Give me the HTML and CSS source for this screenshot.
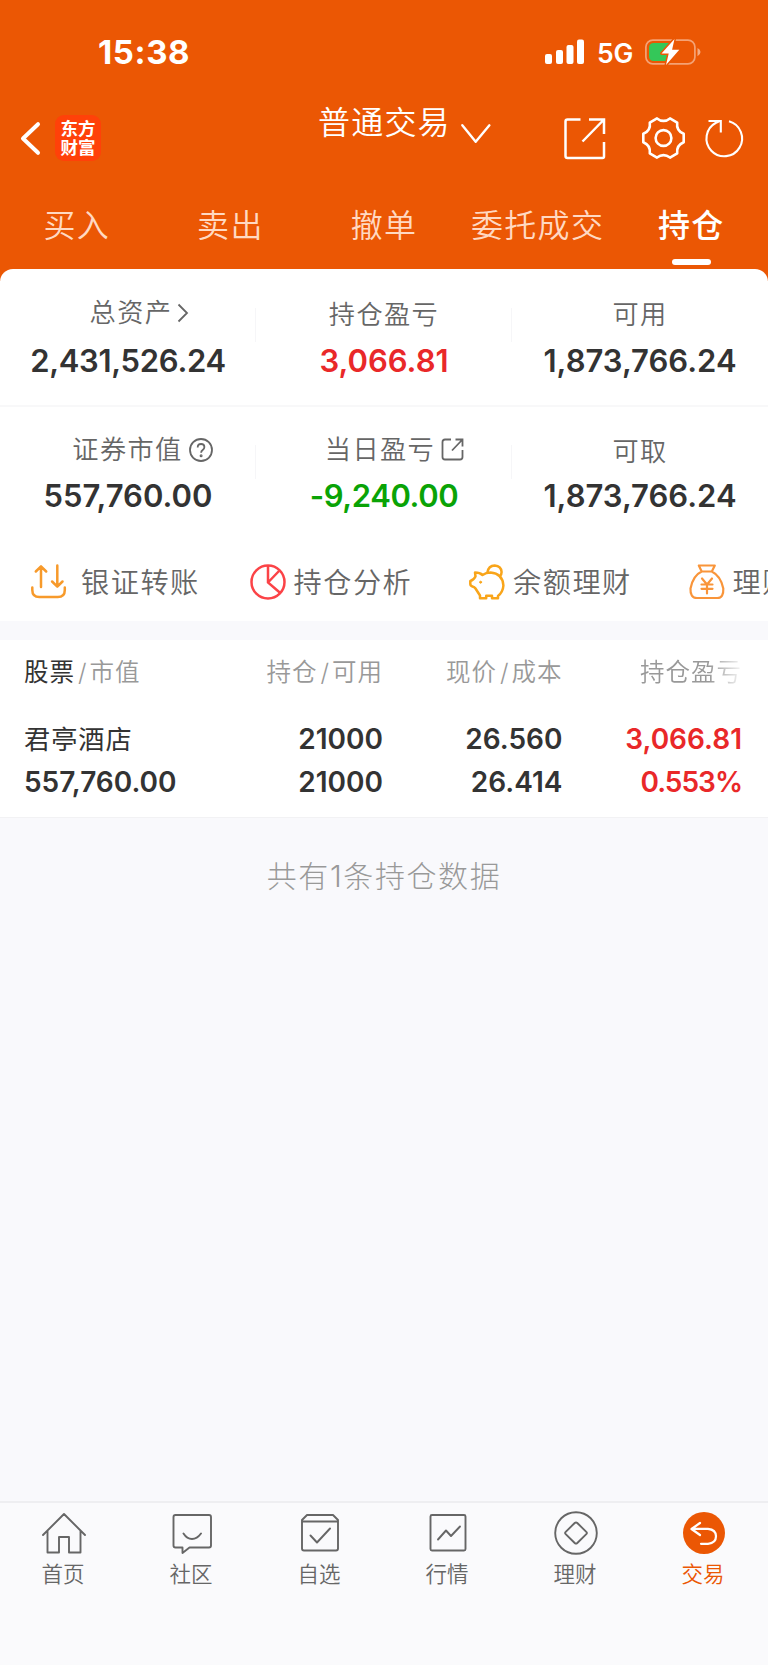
FILE: index.html
```html
<!DOCTYPE html>
<html lang="zh-CN">

<head>
    <meta charset="UTF-8">
    <meta name="viewport" content="width=device-width, initial-scale=1.0">
    <title>普通交易 - 持仓</title>
    <link rel="stylesheet" href="styles.css">
</head>

<body>
    <header class="top">
        <div class="status-bar">
            <span class="time">15:38</span>
            <div class="status-right">
                <svg class="signal" width="40" height="26" viewBox="0 0 40 26" fill="#fff">
                    <rect x="0" y="15" width="7" height="10" rx="2" />
                    <rect x="11" y="11" width="7" height="14" rx="2" />
                    <rect x="21.500" y="6" width="7" height="19" rx="2" />
                    <rect x="32" y="0.500" width="7" height="24.500" rx="2" />
                </svg>
                <span class="network">5G</span>
                <svg class="battery" width="56" height="28" viewBox="0 0 56 28">
                    <rect x="0.900" y="2.100" width="49" height="23.800" rx="7" fill="none" stroke="#fff" stroke-opacity=".45" stroke-width="1.700" />
                    <path d="M52.500 10v8.200q3-1.400 3-4.100t-3-4.100z" fill="#fff" fill-opacity=".5" />
                    <path d="M9 5h15v18H9q-5 0-5-5v-8q0-5 5-5z" fill="#34c759" />
                    <path d="M29.500 1L16.500 15.500h7.200L21 27l13.300-15.300h-7.200z" fill="#fff" stroke="#eb5704" stroke-width="3" stroke-linejoin="round" paint-order="stroke" />
                </svg>
            </div>
        </div>

        <div class="title-bar">
            <div class="title-left">
                <svg width="20" height="34" viewBox="0 0 20 34" fill="none" stroke="#fff" stroke-width="4" stroke-linecap="round" stroke-linejoin="round">
                    <path d="M17 2.200L2 16.500l15 14.300" />
                </svg>
                <div class="logo"><span>东方</span><span>财富</span></div>
            </div>
            <div class="title">
                <span>普通交易</span>
                <svg width="30" height="20" viewBox="0 0 30 20" fill="none" stroke="#fff" stroke-width="2.400" stroke-linecap="round" stroke-linejoin="round">
                    <path d="M1.300 1.300l13.400 16.500L28.400 1.300" />
                </svg>
            </div>
            <div class="title-right">
                <svg class="icon-share" width="42" height="42" viewBox="0 0 42 42" fill="none" stroke="#fff" stroke-width="2.500">
                    <path d="M16.500 1.500H3.500q-2 0-2 2V38q0 2 2 2h35q1.500 0 1.500-1.500V24M25 1.500h15V16M39.500 2L18.500 23.500" />
                </svg>
                <svg class="icon-gear" width="43" height="42" viewBox="0 0 43 42" fill="none" stroke="#fff" stroke-width="2.600" stroke-linejoin="round">
                    <path d="M15 1.400Q21.500 6.500 28 1.400L35.200 5.600Q34.100 13.700 41.700 16.800V25.200Q34.100 28.300 35.200 36.400L28 40.600Q21.500 35.500 15 40.600L7.800 36.400Q8.900 28.300 1.300 25.200V16.800Q8.900 13.700 7.800 5.600Z" />
                    <circle cx="21.500" cy="21" r="7.900" />
                </svg>
                <svg class="icon-refresh" width="38" height="40" viewBox="0 0 38 40" fill="none" stroke="#fff" stroke-width="2.100">
                    <path d="M23 3.300A17.800 17.800 0 1 1 10 4.700L13.800 3" />
                    <path d="M2.500 3h12.300v11.500" />
                </svg>
            </div>
        </div>

        <nav class="tabs">
            <a>买入</a>
            <a>卖出</a>
            <a>撤单</a>
            <a>委托成交</a>
            <a class="active">持仓</a>
        </nav>
    </header>

    <section class="assets">
        <div class="asset-row">
            <div class="asset">
                <div class="asset-label total">总资产
                    <svg width="12" height="20" viewBox="0 0 12 20" fill="none" stroke="#666" stroke-width="1.800">
                        <path d="M1.500 1.500L10 10l-8.500 8.500" />
                    </svg>
                </div>
                <div class="asset-value wide">2,431,526.24</div>
            </div>
            <div class="asset">
                <div class="asset-label plain">持仓盈亏</div>
                <div class="asset-value up">3,066.81</div>
            </div>
            <div class="asset">
                <div class="asset-label plain">可用</div>
                <div class="asset-value">1,873,766.24</div>
            </div>
        </div>
        <div class="asset-row second">
            <div class="asset">
                <div class="asset-label market">证券市值
                    <svg width="24" height="24" viewBox="0 0 24 24" fill="none" stroke="#666" stroke-width="1.800">
                        <circle cx="12" cy="12" r="11" />
                        <path d="M8.700 9.500q0-3.500 3.400-3.500 3.300 0 3.300 3 0 1.700-1.700 2.900-1.600 1.100-1.600 2.900" />
                        <circle cx="12.100" cy="17.800" r=".6" />
                    </svg>
                </div>
                <div class="asset-value">557,760.00</div>
            </div>
            <div class="asset">
                <div class="asset-label today">当日盈亏
                    <svg width="23" height="23" viewBox="0 0 23 23" fill="none" stroke="#666" stroke-width="1.800">
                        <path d="M10 1.500H4q-2.500 0-2.500 2.500v15q0 2.500 2.500 2.500h15q2.500 0 2.500-2.500v-7M14.500 1.500h7v7M21 2L11 12.500" />
                    </svg>
                </div>
                <div class="asset-value down">-9,240.00</div>
            </div>
            <div class="asset">
                <div class="asset-label plain">可取</div>
                <div class="asset-value">1,873,766.24</div>
            </div>
        </div>

        <div class="shortcuts">
            <a class="shortcut transfer">
                <svg width="36" height="36" viewBox="0 0 36 36" fill="none" stroke="#f79a2b" stroke-width="2.500" stroke-linecap="round" stroke-linejoin="round">
                    <path d="M2.300 23.500v2.500q0 7 7 7h18.500q7 0 7-7v-2.500M11 23V2.500M5.800 7.500l5.200-5.200 5.200 5.200M27.300 1.500v21M22.100 17.500l5.200 5.200 5.200-5.200" />
                </svg>
                <span>银证转账</span>
            </a>
            <a class="shortcut">
                <svg width="36" height="36" viewBox="0 0 36 36" fill="none" stroke="#fb4347" stroke-width="2.500">
                    <circle cx="18" cy="18" r="16.500" />
                    <path d="M18 1.500V18.500L30 28.800M18 18.500L29 7" />
                </svg>
                <span>持仓分析</span>
            </a>
            <a class="shortcut">
                <svg width="36" height="36" viewBox="0 0 36 36" fill="none" stroke="#f9a51a" stroke-width="2.500" stroke-linecap="round" stroke-linejoin="round">
                    <path d="M6 8.500q5 0 7.500 2.500 3.500-2.400 8-2.400 12 1 12.900 12.900-.4 6.500-5.400 10.500v2.200h-6v-2.500h-5.800v2.500h-6.200v-2.700L6.500 24.500q-1-1.500-3-2-2.200-.8-2.200-2.500v-3q3.500-1 5.200-4.500Z" />
                    <path d="M18.500 8.300q1-6.700 7.200-6.800 6.500.5 6.900 6.500 0 2.500-1.600 4.200" />
                    <circle cx="11.600" cy="18.200" r="1" fill="#f9a51a" stroke-width="1" />
                </svg>
                <span>余额理财</span>
            </a>
            <a class="shortcut">
                <svg width="36" height="36" viewBox="0 0 36 36" fill="none" stroke="#f9953a" stroke-width="2.200" stroke-linecap="round" stroke-linejoin="round">
                    <path d="M9.800 1.500h16l-3 6q9 4.500 11.500 17 .5 9.500-6 9.500H8q-7 0-6.500-9.500 2.500-13 11.200-17ZM12.700 7.500h10" />
                    <path d="M13 14.500l5 6 5-6M18 20.500V29.500M12.500 20.500h11M12.500 24.800h11" />
                </svg>
                <span>理财</span>
            </a>
        </div>
    </section>

    <section class="holdings">
        <div class="holdings-head">
            <div><b>股票</b><i>/</i>市值</div>
            <div>持仓<i>/</i>可用</div>
            <div>现价<i>/</i>成本</div>
            <div class="fade">持仓盈亏</div>
        </div>
        <div class="holdings-row">
            <div class="stock-name">君亭酒店</div>
            <div>21000</div>
            <div>26.560</div>
            <div class="up">3,066.81</div>
            <div>557,760.00</div>
            <div>21000</div>
            <div>26.414</div>
            <div class="up rate">0.553%</div>
        </div>
    </section>

    <p class="summary">共有1条持仓数据</p>

    <nav class="bottom-nav">
        <a>
            <svg width="44" height="44" viewBox="0 0 44 44">
                <path d="M1 23L22 2l21 21M5.500 19v21.500H17V25h10v15.500h11.500V19" />
            </svg>
            <span>首页</span>
        </a>
        <a>
            <svg width="44" height="44" viewBox="0 0 44 44">
                <path d="M5.500 3H39q2 0 2 2v28.500q0 2-2 2H19.500L12.500 41v-5.500h-7q-2 0-2-2V5q0-2 2-2zM13.500 21.500q3.500 5.500 8.500 5.500t9-5.500" />
            </svg>
            <span>社区</span>
        </a>
        <a>
            <svg width="44" height="44" viewBox="0 0 44 44">
                <path d="M4 9.500h36v27q0 2-2 2H6q-2 0-2-2zV8l5-5h26l5 5v2M12.500 23.500l6.500 7 13-14" />
            </svg>
            <span>自选</span>
        </a>
        <a>
            <svg width="44" height="44" viewBox="0 0 44 44">
                <rect x="4.500" y="3" width="35" height="35.500" rx="1.500" />
                <path d="M12 27.500l8-9 5 5.500 9-9.500" />
            </svg>
            <span>行情</span>
        </a>
        <a>
            <svg width="44" height="44" viewBox="0 0 44 44">
                <circle cx="22" cy="21" r="20.800" />
                <path d="M20.700 11q1.300-1.200 2.600 0l9 8.900q1.200 1.100 0 2.200l-9 8.900q-1.300 1.200-2.600 0l-9-8.900q-1.200-1.100 0-2.200z" />
            </svg>
            <span>理财</span>
        </a>
        <a class="current">
            <svg width="44" height="44" viewBox="0 0 44 44">
                <circle cx="22" cy="21" r="21" />
                <path d="M18 11L9.500 17l8.500 6M10 16.800h16q8 .7 8 7.500t-8 7.500h-7" />
            </svg>
            <span>交易</span>
        </a>
    </nav>
</body>

</html>
```
FILE: styles.css
```css
:root {
    --brand: #eb5704;
    --text: #333;
    --text-mid: #666;
    --text-light: #999;
    --up: #e92829;
    --down: #0aa306;
    --page: #f9f9fc;
}

* {
    margin: 0;
    padding: 0;
    box-sizing: border-box;
}

body {
    display: flex;
    flex-direction: column;
    height: 1665px;
    overflow: hidden;
    background: var(--page);
    color: var(--text);
    font-family: Inter, "Noto Sans CJK SC", sans-serif;
    font-weight: 350;
}

svg {
    display: block;
    flex: none;
    overflow: visible;
}

.top {
    height: 281px;
    margin-bottom: -12px;
    background: var(--brand);
    color: #fff;
}

.status-bar {
    display: flex;
    justify-content: space-between;
    height: 104px;
    padding: 32px 67px 0 98px;
}

.time {
    font-size: 33px;
    font-weight: 700;
    line-height: 40px;
    letter-spacing: 0.600px;
}

.status-right {
    display: flex;
    align-items: center;
    height: 40px;
}

.network {
    margin: 2px 12px 0 12px;
    font-size: 26.500px;
    font-weight: 600;
    line-height: 40px;
    letter-spacing: -0.3px;
}

/* back / title / actions */
.title-bar {
    display: grid;
    grid-template-columns: 318px 1fr 204px;
    height: 86px;
}

.title-left {
    display: flex;
    align-items: flex-start;
    gap: 14px;
    padding: 11px 0 0 21px;
}

.title-left svg {
    margin-top: 7px;
}

.logo {
    display: flex;
    flex-direction: column;
    align-items: center;
    justify-content: center;
    width: 46px;
    height: 46px;
    border-radius: 9px;
    background: #ff4109;
    font-size: 17.500px;
    font-weight: 700;
    line-height: 19px;
}

.title {
    display: flex;
    font-size: 32px;
    line-height: 38px;
    letter-spacing: 1.200px;
}

.title svg {
    margin: 20px 0 0 10px;
}

.title-right {
    display: flex;
}

.icon-share {
    margin-top: 14px;
}

.icon-gear {
    margin: 13px 0 0 36px;
}

.icon-refresh {
    margin: 14px 0 0 21px;
}

.tabs {
    display: grid;
    grid-template-columns: repeat(5, 1fr);
    height: 79px;
}

.tabs a {
    display: flex;
    flex-direction: column;
    align-items: center;
    padding-top: 16px;
    color: #ffd9c2;
    font-size: 32px;
    line-height: 40px;
    letter-spacing: 1.300px;
}

.tabs .active {
    color: #fff;
    font-weight: 500;
}

.tabs .active::after {
    content: "";
    width: 39px;
    height: 6px;
    margin-top: 13px;
    border-radius: 3px;
    background: #fff;
}

/* asset overview */
.assets {
    height: 352px;
    border-radius: 13px 13px 0 0;
    background: #fff;
}

.asset-row {
    display: grid;
    grid-template-columns: repeat(3, 1fr);
    height: 138px;
    padding-top: 26px;
    border-bottom: 2px solid #f8f8f9;
}

.asset-row.second {
    height: 131px;
    padding-top: 25px;
    border-bottom: none;
}

.asset {
    display: flex;
    flex-direction: column;
    align-items: center;
    background: linear-gradient(#f6f6f8, #f6f6f8) right 13px / 1px 34px no-repeat;
}

.asset:last-child {
    background: none;
}

.asset-label {
    display: flex;
    align-items: center;
    height: 36px;
    color: var(--text-mid);
    font-size: 26.200px;
    line-height: 32px;
    letter-spacing: 1.400px;
}

.asset-label svg {
    margin-top: -1px;
}

.asset-label.plain {
    padding-top: 4px;
}

.asset-label.total {
    padding-left: 23px;
}

.asset-label.total svg {
    margin-left: 5px;
}

.asset-label.market {
    padding-left: 29px;
}

.asset-label.market svg,
.asset-label.today svg {
    margin-left: 6px;
}

.asset-label.today {
    padding-left: 21px;
}

.asset-value {
    margin-top: 10px;
    font-size: 31px;
    font-weight: 600;
    line-height: 40px;
}

.asset-value.wide {
    letter-spacing: -0.300px;
}

.second .asset-value {
    margin-top: 8px;
}

.up {
    color: var(--up);
}

.down {
    color: var(--down);
    letter-spacing: -0.400px;
}

.shortcuts {
    display: flex;
    padding: 7px 0 0 30px;
    overflow: hidden;
}

.shortcut {
    display: flex;
    flex: none;
    align-items: center;
    gap: 8px;
    width: 219.500px;
    height: 74px;
    color: var(--text-mid);
    font-size: 28.200px;
    letter-spacing: 1.500px;
    white-space: nowrap;
}

.shortcut span {
    margin-bottom: 4px;
}

.shortcut.transfer {
    gap: 15px;
}

/* position list */
.holdings {
    height: 178px;
    margin-top: 19px;
    border-bottom: 1px solid #f2f2f4;
    background: #fff;
}

.holdings-head,
.holdings-row {
    display: grid;
    grid-template-columns: repeat(4, 179.500px);
    padding: 0 26px 0 24px;
    text-align: right;
}

.holdings-head {
    padding-top: 14px;
    color: var(--text-light);
    font-size: 24.500px;
    line-height: 37px;
    letter-spacing: 1px;
    white-space: nowrap;
}

.holdings-head b {
    color: var(--text);
    font-weight: 400;
}

.holdings-head i {
    margin: 0 2px 0 3px;
    font-style: normal;
}

.holdings-head div:first-child,
.holdings-row div:nth-child(4n + 1) {
    text-align: left;
}

.fade {
    mask-image: linear-gradient(to right, #000 146px, transparent 182px);
}

.holdings-row {
    padding-top: 27px;
    font-size: 28px;
    font-weight: 600;
    line-height: 43px;
}

.holdings-row .stock-name {
    font-size: 26.200px;
    font-weight: 400;
    letter-spacing: 1px;
}

.holdings-row .rate {
    letter-spacing: -1px;
}

.summary {
    margin-top: 37px;
    color: var(--text-light);
    font-size: 30px;
    font-weight: 300;
    line-height: 42px;
    letter-spacing: 1.600px;
    text-align: center;
}

.bottom-nav {
    display: grid;
    grid-template-columns: repeat(6, 1fr);
    height: 164px;
    margin-top: auto;
    border-top: 2px solid #eeeef1;
    background: #fafafc;
}

.bottom-nav a {
    display: flex;
    flex-direction: column;
    align-items: center;
    padding-top: 9px;
    color: var(--text-mid);
    font-size: 21.500px;
    line-height: 30px;
}

.bottom-nav svg {
    fill: none;
    stroke: var(--text-mid);
    stroke-width: 1.900;
    stroke-linecap: round;
    stroke-linejoin: round;
}

.bottom-nav span {
    margin: 3px 2px 0 0;
}

.bottom-nav .current {
    color: var(--brand);
}

.bottom-nav .current circle {
    fill: var(--brand);
    stroke: none;
}

.bottom-nav .current path {
    stroke: #fff;
    stroke-width: 2.200;
}
```
